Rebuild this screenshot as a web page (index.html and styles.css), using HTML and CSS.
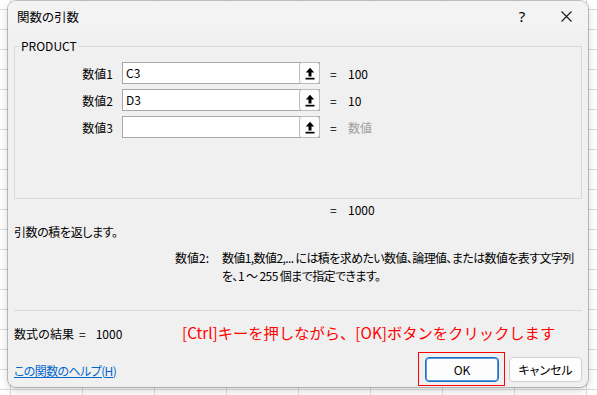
FILE: index.html
```html
<!DOCTYPE html>
<html lang="ja">
<head>
    <meta charset="UTF-8">
    <meta name="viewport" content="width=device-width, initial-scale=1.0">
    <title>関数の引数</title>
    <link rel="stylesheet" href="styles.css">
</head>
<body>
    <div class="dialog">
        <div class="titlebar">
            <span class="title">関数の引数</span>
            <span class="title-btn help-btn">?</span>
            <span class="title-btn">
                <svg width="11" height="11" viewBox="0 0 11 11"><path d="M0.5 0.5 L10.5 10.5 M10.5 0.5 L0.5 10.5" stroke="#1a1a1a" stroke-width="1.1"/></svg>
            </span>
        </div>

        <div class="content">
            <fieldset class="args">
                <legend>PRODUCT</legend>
                <div class="arg-row">
                    <label class="arg-label">数値1</label>
                    <div class="field"><span class="field-text">C3</span><span class="ref-btn"><svg width="10" height="13" viewBox="0 0 10 13"><path d="M5 0.8 L0.8 5.4 H3.5 V9.6 H6.5 V5.4 H9.2 Z" fill="#000"/><rect x="0.5" y="10.8" width="9" height="1.7" fill="#000"/></svg></span></div>
                    <span class="eq">=</span>
                    <span class="val">100</span>
                </div>
                <div class="arg-row">
                    <label class="arg-label">数値2</label>
                    <div class="field"><span class="field-text">D3</span><span class="ref-btn"><svg width="10" height="13" viewBox="0 0 10 13"><path d="M5 0.8 L0.8 5.4 H3.5 V9.6 H6.5 V5.4 H9.2 Z" fill="#000"/><rect x="0.5" y="10.8" width="9" height="1.7" fill="#000"/></svg></span></div>
                    <span class="eq">=</span>
                    <span class="val">10</span>
                </div>
                <div class="arg-row">
                    <label class="arg-label">数値3</label>
                    <div class="field"><span class="field-text"></span><span class="ref-btn"><svg width="10" height="13" viewBox="0 0 10 13"><path d="M5 0.8 L0.8 5.4 H3.5 V9.6 H6.5 V5.4 H9.2 Z" fill="#000"/><rect x="0.5" y="10.8" width="9" height="1.7" fill="#000"/></svg></span></div>
                    <span class="eq">=</span>
                    <span class="val hint">数値</span>
                </div>
            </fieldset>

            <div class="arg-row total">
                <span></span>
                <span></span>
                <span class="eq">=</span>
                <span class="val">1000</span>
            </div>

            <div class="summary">引数の積を返します。</div>

            <div class="arg-help">
                <span class="arg-name">数値2:</span>
                <span class="arg-text">数値1,数値2,... には積を求めたい数値、論理値、または数値を表す文字列を、1 ～ 255 個まで指定できます。</span>
            </div>

            <div class="divider"></div>

            <div class="result-row">
                <span class="result">数式の結果<span class="result-eq">=</span>1000</span>
                <span class="note">[Ctrl]キーを押しながら、[OK]ボタンをクリックします</span>
            </div>

            <div class="footer">
                <a href="#" class="help-link">この関数のヘルプ(H)</a>
                <div class="buttons">
                    <span class="mark"><button class="btn btn-ok">OK</button></span>
                    <button class="btn">キャンセル</button>
                </div>
            </div>
        </div>
    </div>
</body>
</html>
```

FILE: styles.css
```css
/* Excel sheet behind the dialog */
body {
    margin: 0;
    height: 395px;
    overflow: hidden;
    font-family: "Noto Sans CJK JP", "Noto Sans", sans-serif;
    font-size: 12px;
    font-feature-settings: "palt";
    color: #000;
    background-color: #fff;
    background-image:
        linear-gradient(#dcdcdc 1px, transparent 1px),
        linear-gradient(90deg, #dcdcdc 1px, transparent 1px);
    background-size: 72px 20px;
    background-position: 10px 9px;
}

.dialog {
    margin: 1px 0 0 8px;
    width: 580px;
    height: 386px;
    background: #f0f0f0;
    border-radius: 8px;
    box-shadow: 0 0 0 1px rgba(0, 0, 0, 0.22), 0 3px 10px rgba(0, 0, 0, 0.18);
    display: flex;
    flex-direction: column;
    overflow: hidden;
}

.titlebar {
    height: 30px;
    background: #f3f3f3;
    display: flex;
    align-items: center;
    padding-left: 9px;
    font-size: 12.5px;
}

.title {
    flex: 1;
}

.title-btn {
    width: 44px;
    height: 30px;
    display: flex;
    align-items: center;
    justify-content: center;
}

.help-btn {
    font-family: "Noto Sans", sans-serif;
    font-size: 15px;
    padding-left: 1px;
}

.content {
    flex: 1;
    padding: 7px 6px 10px 6px;
    display: flex;
    flex-direction: column;
}

.args {
    margin: 0;
    padding: 8px 0 0 0;
    height: 161px;
    box-sizing: border-box;
    border: 1px solid #d9d9d9;
}

.args legend {
    margin-left: 4px;
    padding: 0 2px;
    line-height: 16px;
}

.arg-row {
    display: grid;
    grid-template-columns: 107px 198px 28px auto;
    align-items: center;
    height: 22px;
    margin-bottom: 5px;
}

.arg-label {
    text-align: right;
    padding-right: 9px;
}

.field {
    display: flex;
    height: 22px;
    box-sizing: border-box;
    border: 1px solid #a8a8a8;
    background: #fff;
}

.field-text {
    flex: 1;
    padding-left: 3px;
    line-height: 20px;
}

.ref-btn {
    width: 21px;
    height: 22px;
    margin: -1px -1px -1px 0;
    box-sizing: border-box;
    border: 1px solid #bcbcbc;
    border-radius: 3px;
    background: #fdfdfd;
    display: flex;
    align-items: center;
    justify-content: center;
}

.eq {
    padding-left: 10px;
}

.hint {
    color: #a0a0a0;
}

.total {
    margin: 1px 0 0 1px;
    height: 18px;
}

.summary {
    margin-top: 5px;
    line-height: 18px;
    letter-spacing: -0.4px;
}

.arg-help {
    display: flex;
    margin-top: 8px;
    padding-left: 161px;
    line-height: 18px;
}

.arg-name {
    flex: none;
    width: 47px;
}

.arg-text {
    width: 362px;
    letter-spacing: -0.6px;
}

.divider {
    margin-top: 25px;
    height: 1px;
    background: #d9d9d9;
}

.result-row {
    display: flex;
    align-items: center;
    height: 41px;
}

.result {
    width: 168px;
    padding-top: 4px;
    font-feature-settings: normal;
}

.result-eq {
    margin: 0 10px 0 5px;
}

.note {
    color: #f00;
    font-size: 15.3px;
    font-feature-settings: normal;
}

.footer {
    display: flex;
    align-items: center;
    justify-content: space-between;
    margin-top: auto;
}

.help-link {
    color: #0066cc;
    text-decoration: underline;
    padding-top: 2px;
    letter-spacing: -0.6px;
}

.buttons {
    display: flex;
    align-items: center;
    gap: 4px;
}

/* red annotation round the OK button */
.mark {
    display: flex;
    padding: 4px 5px 3px 6px;
    border: 1px solid #f00;
}

.btn {
    width: 73px;
    height: 25px;
    box-sizing: border-box;
    border: 1px solid #d0d0d0;
    border-radius: 4px;
    background: #fdfdfd;
    font-family: inherit;
    font-size: 12px;
    font-feature-settings: "palt";
    padding: 0;
}

.btn-ok {
    width: 74px;
    border-color: #1a6fc4;
    box-shadow: inset 0 0 0 1px #5a9ad8;
}
```
